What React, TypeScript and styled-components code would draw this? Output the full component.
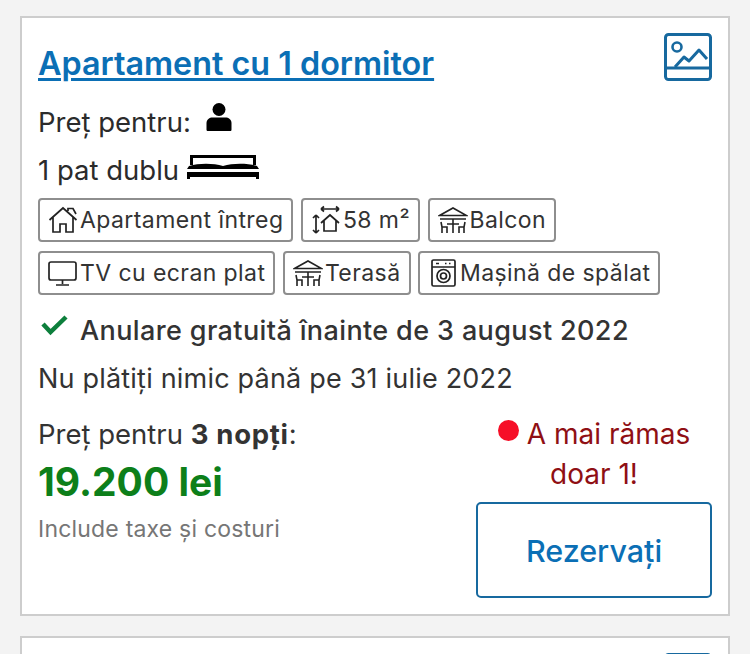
import { createGlobalStyle, styled } from "styled-components";

const GlobalStyle = createGlobalStyle`
  html, body {
    margin: 0;
    padding: 0;
    background: #f3f3f3;
  }
  body {
    font-family: Inter, "Liberation Sans", sans-serif;
    color: #262626;
  }
`;

const Page = styled.div`
  height: 654px;
  overflow: hidden;
  padding: 16px 20px 0;
  box-sizing: border-box;
  display: flex;
  flex-direction: column;
  gap: 20px;
`;

const Card = styled.div`
  flex: none;
  height: 600px;
  box-sizing: border-box;
  background: #fff;
  border: 2px solid #cdcdcd;
  padding: 15px 16px 0;
  display: flex;
  flex-direction: column;
`;

const TitleRow = styled.div`
  display: flex;
  justify-content: space-between;
  align-items: flex-start;
  height: 63px;
`;

const Title = styled.a`
  font-size: 32.3px;
  font-weight: 600;
  line-height: 36px;
  margin-top: 13px;
  color: #0b6fb5;
  text-decoration: underline;
  text-decoration-thickness: 2.5px;
  text-underline-offset: 3px;
`;

const PhotoIcon = styled.svg`
  display: block;
  width: 48px;
  height: 48px;
  color: #17699f;
`;

const InfoLine = styled.div`
  display: flex;
  align-items: flex-end;
  height: 48px;
  font-size: 27.5px;
  line-height: 44px;
  color: #2b2b2b;
`;

const TagRow = styled.div`
  display: flex;
  gap: 7.5px;
  margin-top: ${(p: { $top: number }) => p.$top}px;
`;

const Tag = styled.div`
  display: flex;
  align-items: center;
  gap: 2px;
  height: 44px;
  box-sizing: border-box;
  padding: 0 8px;
  border: 2px solid #8e8e8e;
  border-radius: 4px;
  font-size: 23px;
  letter-spacing: 0.42px;
  color: #333;
  white-space: nowrap;
`;

const TagIcon = styled.svg`
  flex: none;
  width: 30px;
  height: 30px;
  color: #222;
`;

const CancelRow = styled.div`
  display: flex;
  align-items: center;
  gap: 11px;
  margin-top: 15px;
  height: 40px;
  font-size: 27px;
  font-weight: 500;
  letter-spacing: 0.38px;
  color: #333;
`;

const PayLine = styled.div`
  font-size: 27px;
  line-height: 40px;
  margin-top: 9px;
  letter-spacing: 0.2px;
  color: #333;
`;

const Bottom = styled.div`
  display: flex;
  justify-content: space-between;
  margin-top: 15px;
`;

const PriceBlock = styled.div`
  display: flex;
  flex-direction: column;
`;

const PriceLabel = styled.div`
  font-size: 27.5px;
  line-height: 40px;
  color: #333;
  b {
    font-weight: 700;
    letter-spacing: 0.7px;
  }
`;

const Price = styled.div`
  font-size: 39px;
  font-weight: 700;
  line-height: 50px;
  margin-top: 3px;
  color: #0d7f1a;
`;

const Taxes = styled.div`
  font-size: 23px;
  line-height: 30px;
  margin-top: 7px;
  letter-spacing: 0.2px;
  color: #767676;
`;

const ActionBlock = styled.div`
  width: 236px;
  display: flex;
  flex-direction: column;
`;

const Scarcity = styled.div`
  font-size: 28px;
  line-height: 40px;
  text-align: center;
  color: #8f0f14;
  height: 80px;
`;

const Dot = styled.span`
  display: inline-block;
  width: 21px;
  height: 21px;
  border-radius: 50%;
  background: #f60f27;
  margin-right: 8px;
  vertical-align: 3px;
`;

const BookButton = styled.button`
  width: 236px;
  height: 96px;
  margin-top: 8px;
  box-sizing: border-box;
  background: #fff;
  border: 2px solid #17699f;
  border-radius: 5px;
  font: 500 30.5px Inter, "Liberation Sans", sans-serif;
  color: #0b6fb5;
`;

const Person = styled.svg`
  width: 28px;
  height: 28px;
  margin: 0 0 13px 14px;
  color: #000;
`;

const Bed = styled.svg`
  width: 72px;
  height: 24px;
  margin: 0 0 13px 8px;
  color: #000;
`;

const Check = styled.svg`
  flex: none;
  width: 31px;
  height: 24px;
  margin: 0 0 10px 0;
  color: #0d7f3c;
`;

const Photo = () => (
  <PhotoIcon viewBox="0 0 48 48" fill="none" stroke="currentColor" strokeWidth="3">
    <rect x="1.500" y="1.500" width="45" height="45" rx="3" />
    <path d="M2 35h44" />
    <circle cx="13" cy="14" r="4.500" strokeWidth="2.600" />
    <path d="M11 34l9-10 5 4 10-11 8 9" strokeLinejoin="round" />
  </PhotoIcon>
);

const Terrace = () => (
  <TagIcon viewBox="0 0 30 30" fill="none" stroke="currentColor" strokeWidth="1.600">
    <path d="M1.500 10.500L15 3l13.500 7.500z" />
    <path d="M2 14h26M15 14v14M9 19h12" />
    <path d="M3 17l1 5v6M4 22h5v6M27 17l-1 5v6M26 22h-5v6" />
  </TagIcon>
);

const App = () => (
  <>
    <GlobalStyle />
    <Page>
      <Card>
        <TitleRow>
          <Title>Apartament cu 1 dormitor</Title>
          <Photo />
        </TitleRow>
        <InfoLine>
          Preț pentru:
          <Person viewBox="0 0 28 28" fill="currentColor">
            <circle cx="14" cy="6.500" r="6.500" />
            <path d="M3 28c-1 0-1.500-.5-1.500-1.500V20c0-3.500 3-5.500 6-5.500h13c3 0 6 2 6 5.500v6.500c0 1-.5 1.500-1.500 1.500z" />
          </Person>
        </InfoLine>
        <InfoLine>
          1 pat dublu
          <Bed viewBox="0 0 72 24" fill="currentColor">
            <path d="M3 0h66v10h-3V3H6v7H3z" />
            <path d="M2 11c10-3 24-3 34 0 10-3 24-3 34 0l2 3H0z" />
            <path d="M0 17h72v7h-3v-2H3v2H0z" />
          </Bed>
        </InfoLine>
        <TagRow $top={6}>
          <Tag>
            <TagIcon viewBox="0 0 30 30" fill="none" stroke="currentColor" strokeWidth="1.700">
              <path d="M1.500 15L15 3l13.500 12M5 12.500V27h7v-8h6v8h7V12.500M20 6V3.500h5L28 9" />
            </TagIcon>
            Apartament întreg
          </Tag>
          <Tag>
            <TagIcon viewBox="0 0 30 30" fill="none" stroke="currentColor" strokeWidth="1.700">
              <path d="M10 4h18M10 4l3-2.500M10 4l3 2.500M28 4l-3-2.500M28 4l-3 2.500" />
              <path d="M5 10v18M5 10L2 13M5 10l3 3M5 28l-3-3M5 28l3-3" />
              <path d="M10 18l9-8 9 8M13 16v10h12V16" />
            </TagIcon>
            58 m²
          </Tag>
          <Tag>
            <Terrace />
            Balcon
          </Tag>
        </TagRow>
        <TagRow $top={9}>
          <Tag>
            <TagIcon viewBox="0 0 30 30" fill="none" stroke="currentColor" strokeWidth="1.700">
              <rect x="1" y="4" width="27" height="18" rx="2" />
              <path d="M14.500 22v4M8 27h13" />
            </TagIcon>
            TV cu ecran plat
          </Tag>
          <Tag>
            <Terrace />
            Terasă
          </Tag>
          <Tag>
            <TagIcon viewBox="0 0 30 30" fill="none" stroke="currentColor" strokeWidth="1.700">
              <rect x="4" y="2" width="23" height="26" rx="1.500" />
              <path d="M4 9h23M8 5.500h3M17 5.500h1.500M21 5.500h1.500" />
              <circle cx="15.500" cy="18" r="6.500" />
              <circle cx="15.500" cy="18" r="3" />
            </TagIcon>
            Mașină de spălat
          </Tag>
        </TagRow>
        <CancelRow>
          <Check viewBox="0 0 31 24" fill="none" stroke="currentColor" strokeWidth="4.500">
            <path d="M5 11l7.500 8L28 4" />
          </Check>
          Anulare gratuită înainte de 3 august 2022
        </CancelRow>
        <PayLine>Nu plătiți nimic până pe 31 iulie 2022</PayLine>
        <Bottom>
          <PriceBlock>
            <PriceLabel>
              Preț pentru <b>3 nopți</b>:
            </PriceLabel>
            <Price>19.200 lei</Price>
            <Taxes>Include taxe și costuri</Taxes>
          </PriceBlock>
          <ActionBlock>
            <Scarcity>
              <Dot />
              A mai rămas
              <br />
              doar 1!
            </Scarcity>
            <BookButton>Rezervați</BookButton>
          </ActionBlock>
        </Bottom>
      </Card>
      <Card>
        <TitleRow>
          <span />
          <Photo />
        </TitleRow>
      </Card>
    </Page>
  </>
);

export default App;
